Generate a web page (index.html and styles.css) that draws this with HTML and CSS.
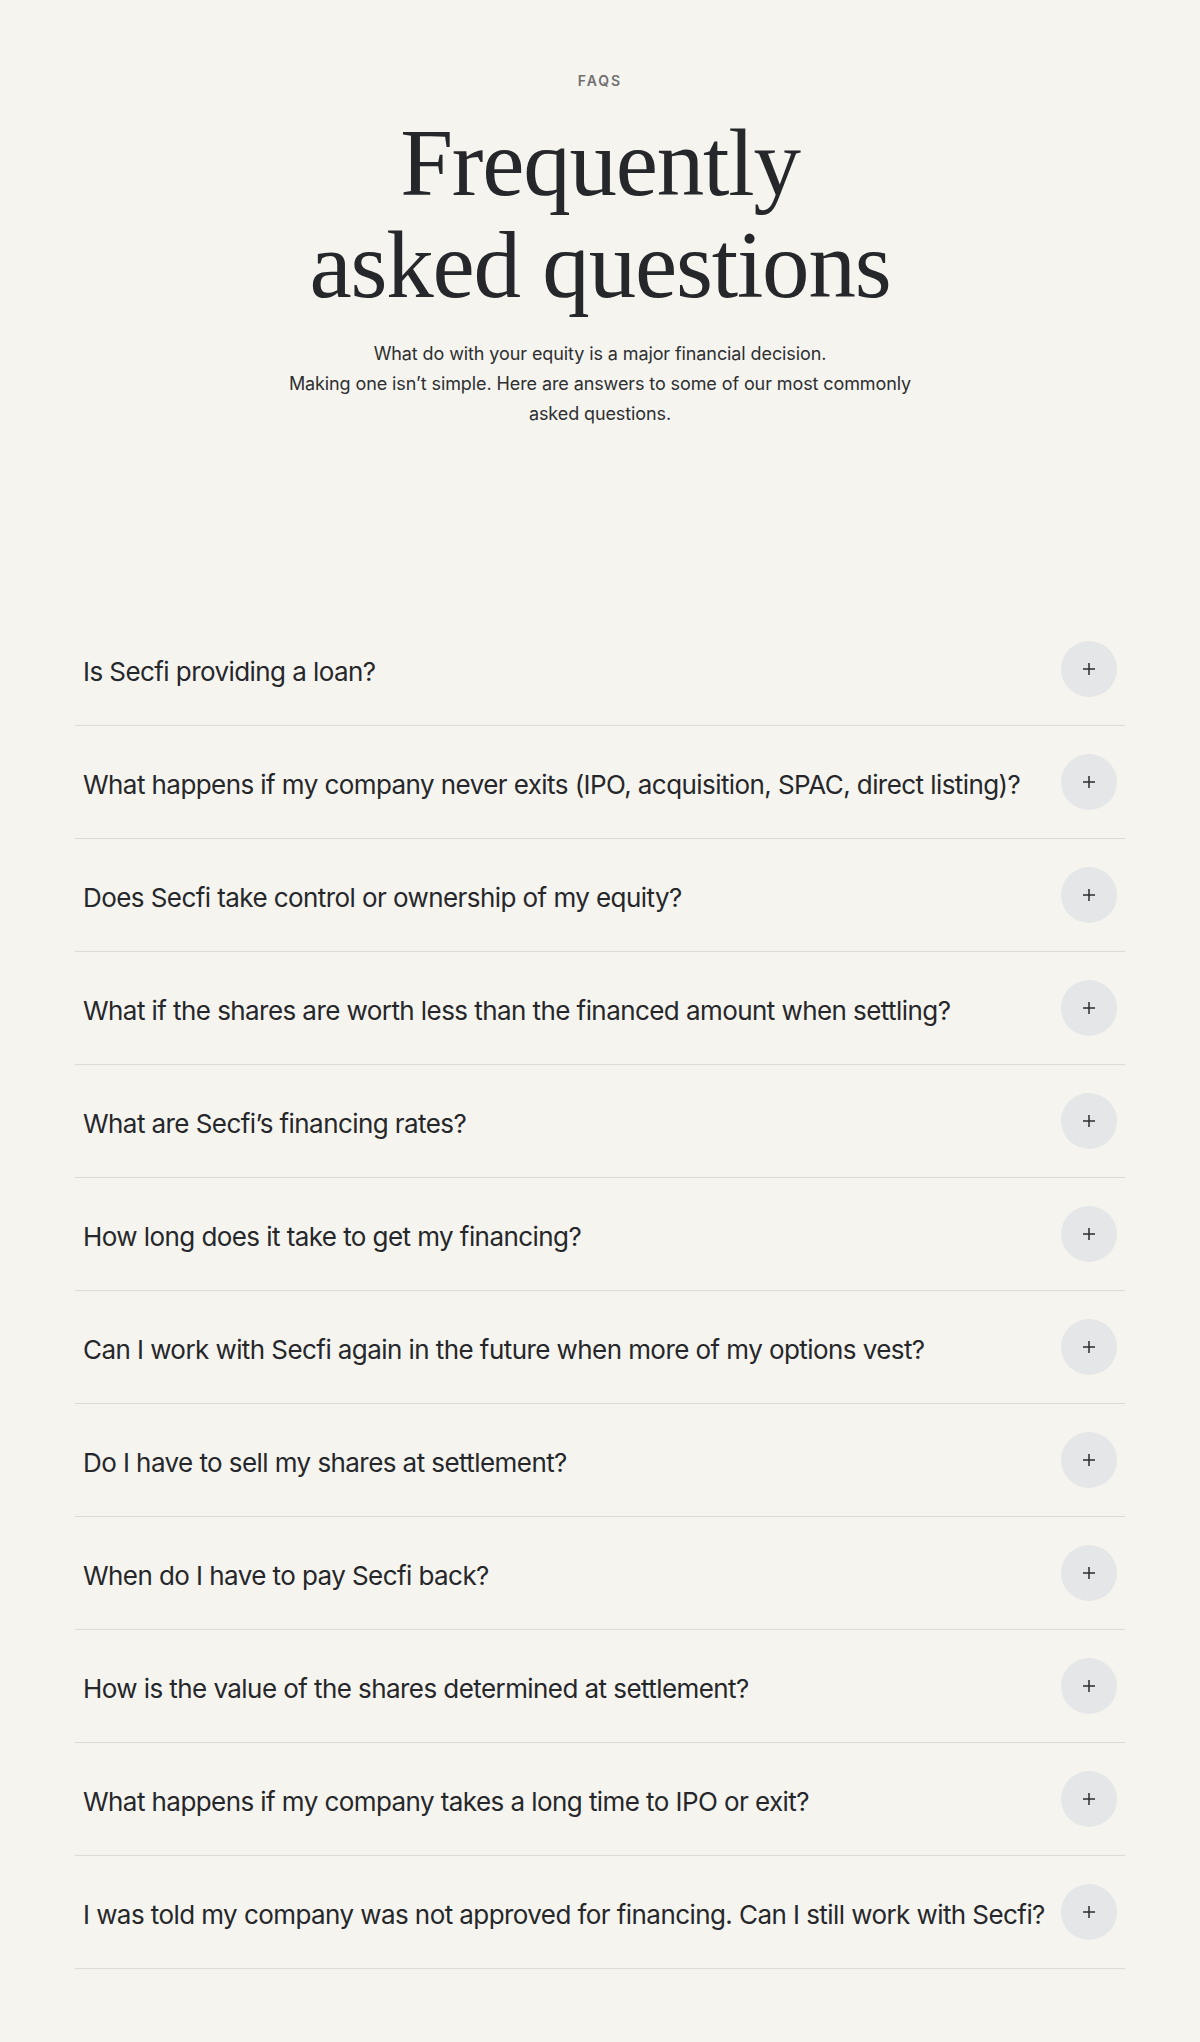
FILE: index.html
```html
<!DOCTYPE html>
<html lang="en">
<head>
<meta charset="utf-8">
<title>FAQs</title>
<link rel="stylesheet" href="styles.css">
</head>
<body>
<section class="faq">
  <header class="faq-header">
    <div class="eyebrow">FAQS</div>
    <h1 class="title">Frequently<br>asked questions</h1>
    <p class="intro">What do with your equity is a major financial decision.<br>Making one isn’t simple. Here are answers to some of our most commonly<br>asked questions.</p>
  </header>
  <ul class="faq-list">
    <li class="faq-item"><span class="q">Is Secfi providing a loan?</span><button class="toggle" aria-label="Expand"><svg viewBox="0 0 12 12" width="12" height="12"><path d="M6 0v12M0 6h12"/></svg></button></li>
    <li class="faq-item"><span class="q">What happens if my company never exits (IPO, acquisition, SPAC, direct listing)?</span><button class="toggle" aria-label="Expand"><svg viewBox="0 0 12 12" width="12" height="12"><path d="M6 0v12M0 6h12"/></svg></button></li>
    <li class="faq-item"><span class="q">Does Secfi take control or ownership of my equity?</span><button class="toggle" aria-label="Expand"><svg viewBox="0 0 12 12" width="12" height="12"><path d="M6 0v12M0 6h12"/></svg></button></li>
    <li class="faq-item"><span class="q">What if the shares are worth less than the financed amount when settling?</span><button class="toggle" aria-label="Expand"><svg viewBox="0 0 12 12" width="12" height="12"><path d="M6 0v12M0 6h12"/></svg></button></li>
    <li class="faq-item"><span class="q">What are Secfi’s financing rates?</span><button class="toggle" aria-label="Expand"><svg viewBox="0 0 12 12" width="12" height="12"><path d="M6 0v12M0 6h12"/></svg></button></li>
    <li class="faq-item"><span class="q">How long does it take to get my financing?</span><button class="toggle" aria-label="Expand"><svg viewBox="0 0 12 12" width="12" height="12"><path d="M6 0v12M0 6h12"/></svg></button></li>
    <li class="faq-item"><span class="q">Can I work with Secfi again in the future when more of my options vest?</span><button class="toggle" aria-label="Expand"><svg viewBox="0 0 12 12" width="12" height="12"><path d="M6 0v12M0 6h12"/></svg></button></li>
    <li class="faq-item"><span class="q">Do I have to sell my shares at settlement?</span><button class="toggle" aria-label="Expand"><svg viewBox="0 0 12 12" width="12" height="12"><path d="M6 0v12M0 6h12"/></svg></button></li>
    <li class="faq-item"><span class="q">When do I have to pay Secfi back?</span><button class="toggle" aria-label="Expand"><svg viewBox="0 0 12 12" width="12" height="12"><path d="M6 0v12M0 6h12"/></svg></button></li>
    <li class="faq-item"><span class="q">How is the value of the shares determined at settlement?</span><button class="toggle" aria-label="Expand"><svg viewBox="0 0 12 12" width="12" height="12"><path d="M6 0v12M0 6h12"/></svg></button></li>
    <li class="faq-item"><span class="q">What happens if my company takes a long time to IPO or exit?</span><button class="toggle" aria-label="Expand"><svg viewBox="0 0 12 12" width="12" height="12"><path d="M6 0v12M0 6h12"/></svg></button></li>
    <li class="faq-item"><span class="q">I was told my company was not approved for financing. Can I still work with Secfi?</span><button class="toggle" aria-label="Expand"><svg viewBox="0 0 12 12" width="12" height="12"><path d="M6 0v12M0 6h12"/></svg></button></li>
  </ul>
</section>
</body>
</html>
```

FILE: styles.css
```css
* { box-sizing: border-box; }

html, body {
  margin: 0;
  padding: 0;
  background: #f5f4ef;
}

body {
  font-family: Inter, "Noto Sans", "Liberation Sans", sans-serif;
  color: #27282b;
}

.faq {
  padding: 71px 0 74px;
}

.faq-header {
  text-align: center;
}

.eyebrow {
  font-size: 14px;
  line-height: 20px;
  font-weight: 600;
  letter-spacing: 0.14em;
  color: #707070;
}

.title {
  margin: 21px 0 0;
  font-family: "Liberation Serif", "Times New Roman", serif;
  font-weight: 400;
  font-size: 95px;
  line-height: 102px;
  letter-spacing: -1.2px;
  color: #26272a;
}

.intro {
  margin: 23px 0 0;
  font-size: 18px;
  line-height: 30px;
  letter-spacing: -0.1px;
  color: #2e2f31;
}

.faq-list {
  list-style: none;
  width: 1050px;
  margin: 184px auto 0;
  padding: 0;
}

.faq-item {
  display: flex;
  align-items: center;
  justify-content: space-between;
  gap: 10px;
  padding: 28px 8px;
  border-bottom: 1px solid #dcdbd6;
}

.q {
  flex: 1 1 auto;
  min-width: 0;
  padding-top: 5px;
  font-size: 26px;
  line-height: 34px;
  letter-spacing: -0.022em;
  color: #26272a;
}

.toggle {
  flex: 0 0 56px;
  width: 56px;
  height: 56px;
  border: 0;
  border-radius: 50%;
  background: #e4e6e7;
  display: flex;
  align-items: center;
  justify-content: center;
  padding: 0;
  cursor: pointer;
}

.toggle svg {
  display: block;
}

.toggle path {
  stroke: #2b2c2e;
  stroke-width: 1.5;
  fill: none;
}
```
